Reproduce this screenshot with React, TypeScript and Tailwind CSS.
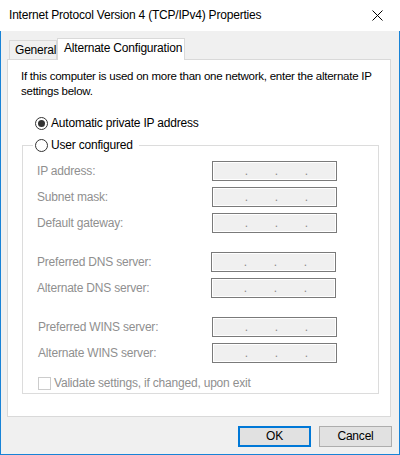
import type { ReactNode } from 'react';

const FONT = "font-['Liberation_Sans',Arial,sans-serif]";

function CloseIcon() {
  return (
    <svg width="11" height="11" viewBox="0 0 11 11" fill="none" stroke="#000" strokeWidth="1">
      <path d="M0.5 0.5 10.5 10.5M10.5 0.5 0.5 10.5" />
    </svg>
  );
}

function IpBox() {
  return (
    <div className="flex h-[20px] w-[125px] items-center border border-[#7a7a7a] bg-[#f0f0f0] pl-[5px] text-[12px] leading-[15px] text-[#8a8a8a] shadow-[inset_0_0_0_1px_#fff]">
      <span className="w-[30px] text-right">.</span>
      <span className="w-[30px] text-right">.</span>
      <span className="w-[30px] text-right">.</span>
    </div>
  );
}

function Row({ label, className = '', labelW = 'w-[175px]' }: { label: string; className?: string; labelW?: string }) {
  return (
    <div className={`flex items-center ${className}`}>
      <span className={`${labelW} shrink-0 whitespace-nowrap text-[#8f8f8f]`}>{label}</span>
      <IpBox />
    </div>
  );
}

function Radio({ checked, children }: { checked?: boolean; children: ReactNode }) {
  return (
    <label className="flex h-[15px] items-center gap-[3px] whitespace-nowrap text-black">
      <span className="flex h-[13px] w-[13px] items-center justify-center rounded-full border border-[#333] bg-white">
        {checked && <span className="h-[7px] w-[7px] rounded-full bg-[#333]" />}
      </span>
      {children}
    </label>
  );
}

export default function App() {
  return (
    <div className={`flex h-[455px] w-[400px] flex-col bg-white text-[12px] leading-[15px] tracking-[-0.2px] ${FONT}`}>
      {/* Title bar */}
      <div className="flex h-[31px] shrink-0 items-center justify-between pl-[9px]">
        <span className="whitespace-nowrap text-black">Internet Protocol Version 4 (TCP/IPv4) Properties</span>
        <div className="flex h-full w-[46px] items-center justify-center">
          <CloseIcon />
        </div>
      </div>

      {/* Body */}
      <div className="flex flex-1 flex-col border-x border-b border-[#1883d7] bg-[#f0f0f0] pl-[6px] pt-[7px]">
        {/* Tabs */}
        <div className="flex h-[21px] items-end pl-[2px]">
          <div className="flex h-[19px] w-[48px] items-center whitespace-nowrap border-x border-t border-[#d9d9d9] bg-[#f0f0f0] pl-[5px] pt-[1px]">
            General
          </div>
          <div className="relative z-10 mb-[-1px] flex h-[22px] w-[128px] items-center whitespace-nowrap border-x border-t border-[#d9d9d9] bg-white pl-[6px] pb-[2px]">
            Alternate Configuration
          </div>
        </div>

        {/* Panel */}
        <div className="flex h-[358px] w-[384px] flex-col border border-[#d9d9d9] bg-white pt-[9px]">
          <p className="ml-[13px] whitespace-nowrap text-[11.5px] tracking-[-0.25px]">
            If this computer is used on more than one network, enter the alternate IP
            <br />
            settings below.
          </p>

          <div className="ml-[27px] mt-[17px]">
            <Radio checked>Automatic private IP address</Radio>
          </div>

          <fieldset className="ml-[14px] mt-[7px] w-[357px] border border-[#dcdcdc] pb-[3px]">
            <legend className="ml-[10px] pl-[2px] pr-[6px]">
              <Radio>User configured</Radio>
            </legend>

            <div className="flex flex-col pl-[14px] pt-[8px]">
              <Row label="IP address:" />
              <Row label="Subnet mask:" className="mt-[6px]" />
              <Row label="Default gateway:" className="mt-[6px]" />
              <Row label="Preferred DNS server:" className="mt-[19px]" labelW="w-[174px]" />
              <Row label="Alternate DNS server:" className="mt-[6px]" labelW="w-[174px]" />
              <Row label="Preferred WINS server:" className="mt-[19px] pl-[1px]" labelW="w-[174px]" />
              <Row label="Alternate WINS server:" className="mt-[6px] pl-[1px]" labelW="w-[174px]" />

              <label className="mt-[14px] flex h-[13px] items-center gap-[3px] whitespace-nowrap pl-[1px] text-[#8f8f8f]">
                <span className="h-[13px] w-[13px] border border-[#cccccc] bg-white" />
                Validate settings, if changed, upon exit
              </label>
            </div>
          </fieldset>
        </div>

        {/* Buttons */}
        <div className="mt-[9px] flex justify-end gap-[8px] pr-[7px]">
          <button className="flex h-[21px] w-[73px] items-center justify-center border-2 border-[#0078d7] bg-[#e1e1e1] text-black">
            OK
          </button>
          <button className="flex h-[21px] w-[73px] items-center justify-center border border-[#adadad] bg-[#e1e1e1] text-black">
            Cancel
          </button>
        </div>
      </div>
    </div>
  );
}
